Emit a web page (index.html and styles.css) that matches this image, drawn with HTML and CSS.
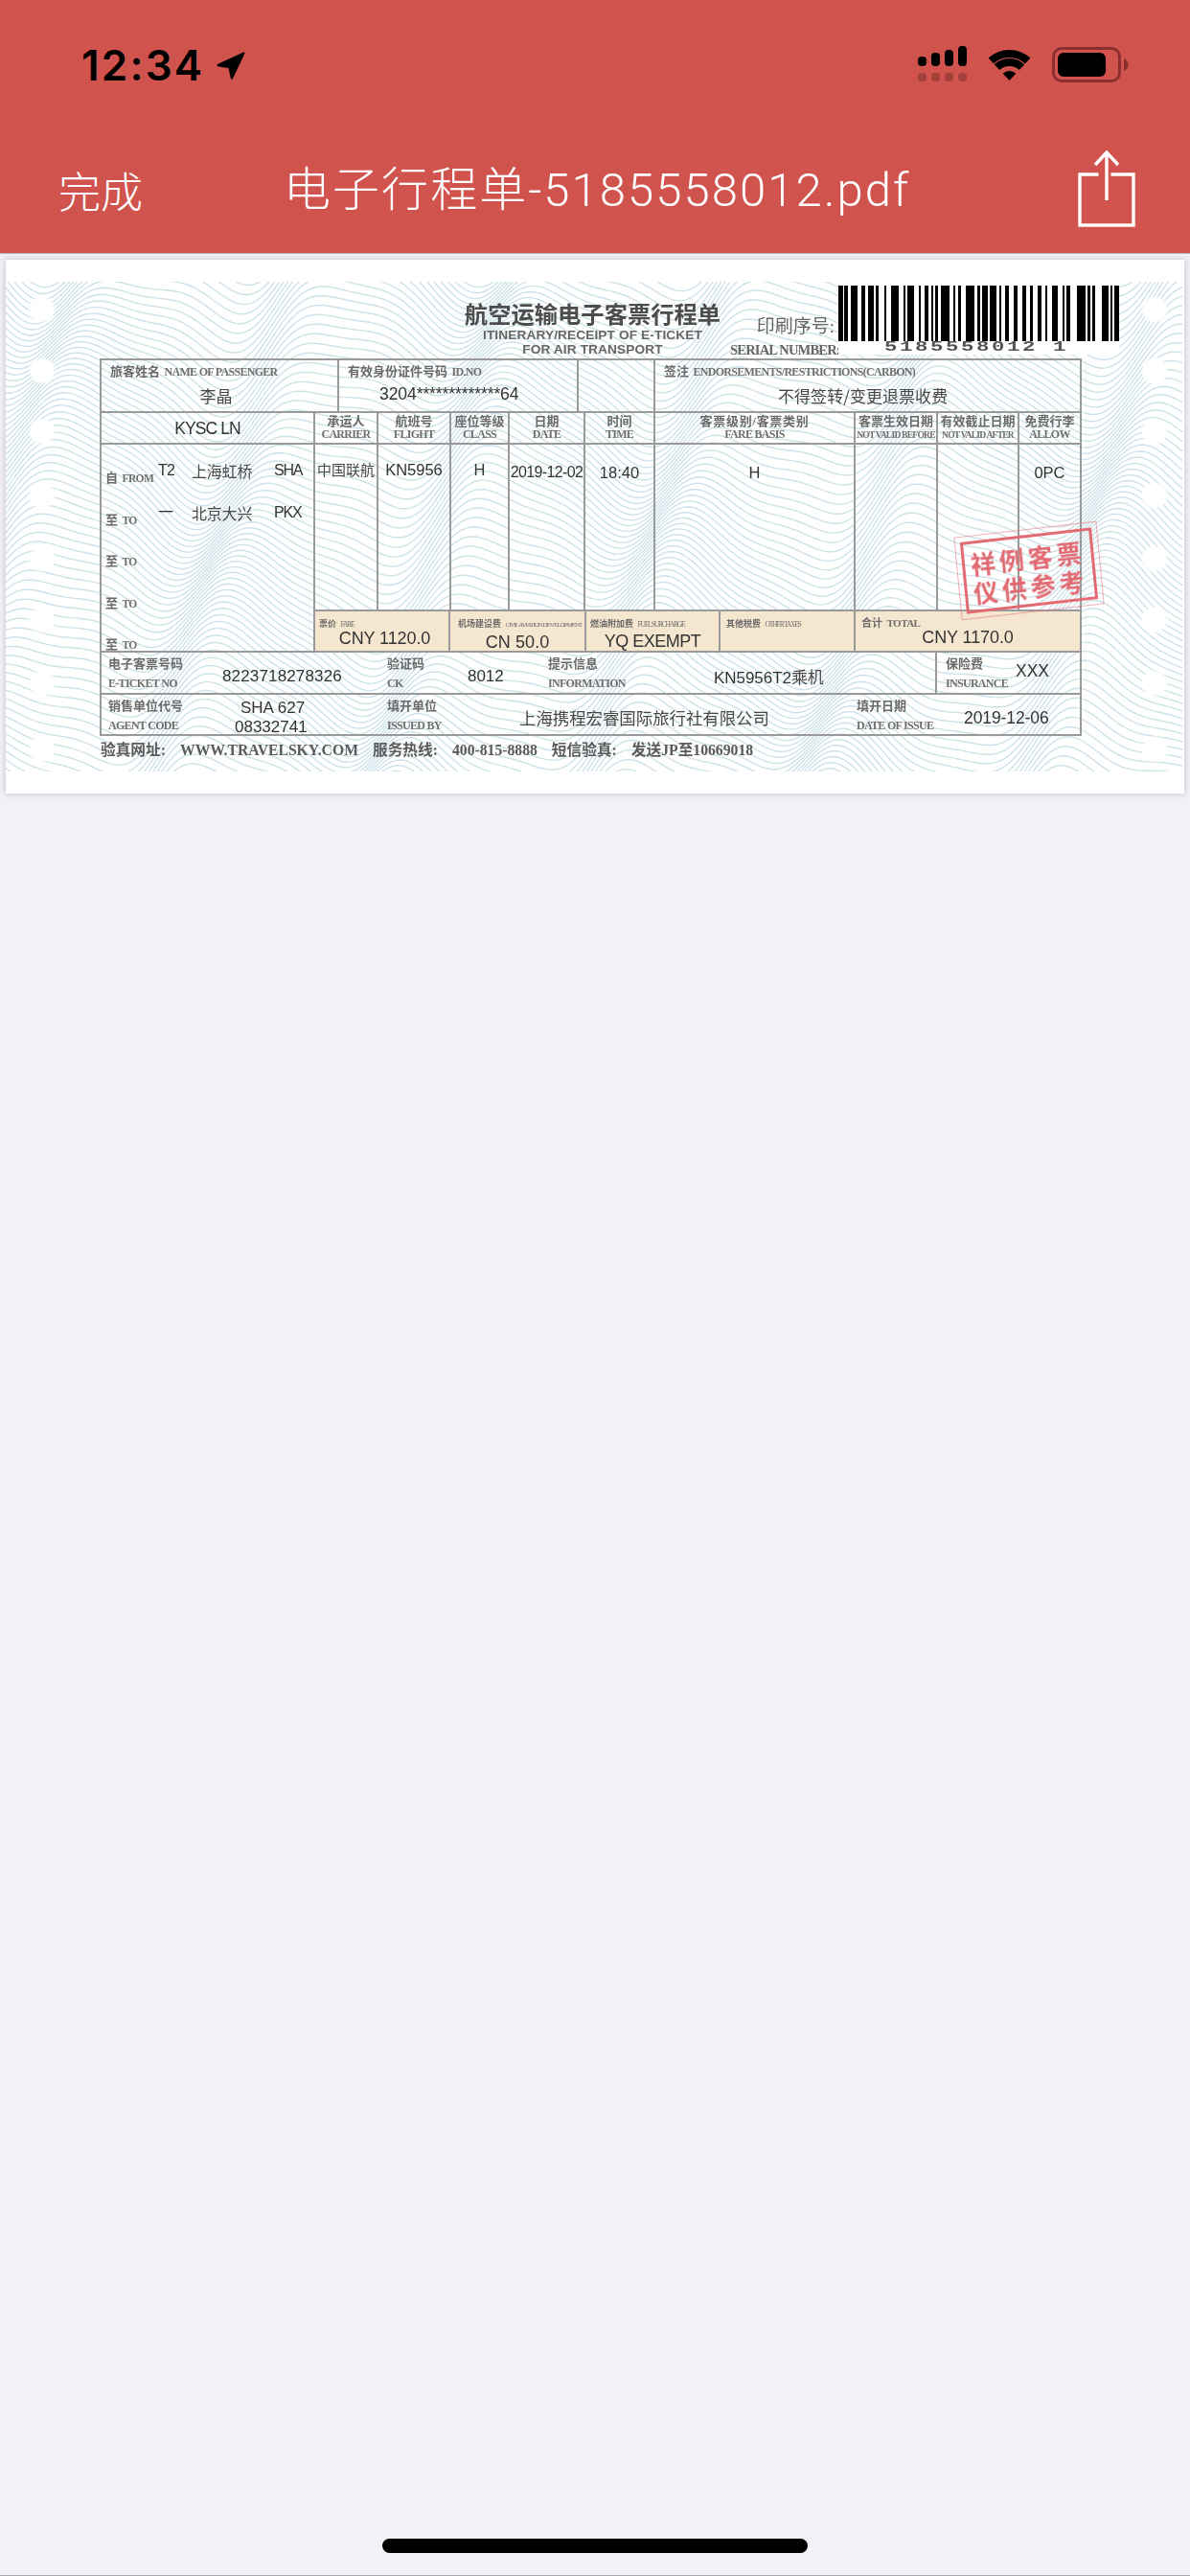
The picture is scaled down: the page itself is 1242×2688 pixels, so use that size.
FILE: index.html
```html
<!DOCTYPE html>
<html lang="zh">
<head>
<meta charset="utf-8">
<title>电子行程单-5185558012.pdf</title>
<link rel="stylesheet" href="styles.css">
<script src="guilloche.js" defer></script>
</head>
<body>
<header class="top">
  <div class="status">
    <span class="time">12:34</span>
    <svg class="loc" viewBox="0 0 32 32" width="32" height="32"><path d="M2 15 L29 2.5 Q31 2 30.3 4 L18 30 Q16.5 32 15.8 29.5 L13.5 19 L3 17.6 Q0.5 16.5 2 15Z"/></svg>
    <div class="signal">
      <div class="sig-col"><i class="bar b1"></i><i class="dim"></i></div>
      <div class="sig-col"><i class="bar b2"></i><i class="dim"></i></div>
      <div class="sig-col"><i class="bar b3"></i><i class="dim"></i></div>
      <div class="sig-col"><i class="bar b4"></i><i class="dim"></i></div>
    </div>
    <svg class="wifi" viewBox="0 0 47 37" width="47" height="37"><path class="arc" d="M4.4 12.5 A28 28 0 0 1 42.6 12.5"/><path class="arc" d="M10.5 19.1 A19 19 0 0 1 36.5 19.1"/><path d="M23.5 33 L16.7 25.7 A10 10 0 0 1 30.3 25.7Z"/></svg>
    <div class="battery"><div class="battery-fill"></div></div>
    <svg class="nub" viewBox="0 0 5 13" width="5" height="13"><path d="M0 0 A7 7 0 0 1 0 13Z"/></svg>
  </div>
  <nav class="nav">
    <span class="done">完成</span>
    <span class="file">电子行程单-5185558012.pdf</span>
    <svg class="share" viewBox="0 0 64 84" width="64" height="84"><path d="M24.5 28 H5 V81 H61 V28 H37.5 M33 55 V5 M21 18 L33 5 L45 18"/></svg>
  </nav>
</header>

<main class="viewer">
  <article class="doc">
    <div class="ticket">
      <svg class="guilloche" id="guilloche" width="1230" height="511"><path id="guilloche-lines" class="guilloche-lines"/></svg>
      <i class="hole l h1"></i><i class="hole l h2"></i><i class="hole l h3"></i><i class="hole l h4"></i><i class="hole l h5"></i><i class="hole l h6"></i><i class="hole l h7"></i><i class="hole l h8"></i>
      <i class="hole r h1"></i><i class="hole r h2"></i><i class="hole r h3"></i><i class="hole r h4"></i><i class="hole r h5"></i><i class="hole r h6"></i><i class="hole r h7"></i><i class="hole r h8"></i>

      <div class="ticket-body">
        <div class="head">
          <div class="title-block">
            <div class="title">航空运输电子客票行程单</div>
            <div class="subtitle">ITINERARY/RECEIPT OF E-TICKET</div>
            <div class="subtitle">FOR AIR TRANSPORT</div>
          </div>
          <div class="serial">
            <div class="serial-cn">印刷序号:</div>
            <div class="serial-en">SERIAL NUMBER:</div>
          </div>
          <div class="barcode">
            <svg viewBox="0 0 293 58" width="293" height="58" preserveAspectRatio="none"><path d="M0 0h5v58H0zM6 0h4v58H6zM13 0h7v58h-7zM24 0h4v58h-4zM31 0h6v58h-6zM39 0h3v58h-3zM48 0h2v58h-2zM55 0h8v58h-8zM68 0h2v58h-2zM72 0h7v58h-7zM84 0h2v58h-2zM90 0h4v58h-4zM97 0h2v58h-2zM101 0h3v58h-3zM107 0h9v58h-9zM120 0h2v58h-2zM125 0h3v58h-3zM133 0h9v58h-9zM145 0h3v58h-3zM150 0h6v58h-6zM158 0h7v58h-7zM168 0h2v58h-2zM174 0h4v58h-4zM183 0h4v58h-4zM192 0h4v58h-4zM200 0h3v58h-3zM208 0h4v58h-4zM216 0h2v58h-2zM223 0h6v58h-6zM234 0h2v58h-2zM238 0h4v58h-4zM249 0h9v58h-9zM260 0h3v58h-3zM265 0h3v58h-3zM275 0h7v58h-7zM284 0h2v58h-2zM288 0h5v58h-5z"/></svg>
            <div class="barcode-num">5185558012&nbsp;1</div>
          </div>
        </div>

        <div class="sheet">
          <div class="row r-pax">
            <div class="cell line pad-pax">
              <div class="label"><span class="cn">旅客姓名</span> <span class="en">NAME OF PASSENGER</span></div>
              <div class="val cjk center">李晶</div>
            </div>
            <div class="cell line pad-pax">
              <div class="label lab-id"><span class="cn">有效身份证件号码</span> <span class="en">ID.NO</span></div>
              <div class="val id">3204*************64</div>
            </div>
            <div class="cell line"></div>
            <div class="cell pad-pax">
              <div class="label lab-end"><span class="cn">签注</span> <span class="en">ENDORSEMENTS/RESTRICTIONS(CARBON)</span></div>
              <div class="val cjk endorse">不得签转/变更退票收费</div>
            </div>
          </div>

          <div class="row r-hdr">
            <div class="cell line mid"><div class="val name">KYSC LN</div></div>
            <div class="cell line th"><div class="cn">承运人</div><div class="en">CARRIER</div></div>
            <div class="cell line th"><div class="cn">航班号</div><div class="en">FLIGHT</div></div>
            <div class="cell line th"><div class="cn">座位等级</div><div class="en">CLASS</div></div>
            <div class="cell line th"><div class="cn">日期</div><div class="en">DATE</div></div>
            <div class="cell line th"><div class="cn">时间</div><div class="en">TIME</div></div>
            <div class="cell line th"><div class="cn wide">客票级别/客票类别</div><div class="en">FARE BASIS</div></div>
            <div class="cell line th"><div class="cn">客票生效日期</div><div class="en tight">NOT VALID BEFORE</div></div>
            <div class="cell line th"><div class="cn">有效截止日期</div><div class="en tight">NOT VALID AFTER</div></div>
            <div class="cell th"><div class="cn">免费行李</div><div class="en">ALLOW</div></div>
          </div>

          <div class="row r-main">
            <div class="route line">
              <div class="leg"><span class="leg-label"><span class="cn">自</span> <span class="en">FROM</span></span><span class="val term">T2</span><span class="val cjk port">上海虹桥</span><span class="val code">SHA</span></div>
              <div class="leg"><span class="leg-label"><span class="cn">至</span> <span class="en">TO</span></span><span class="val term">一</span><span class="val cjk port">北京大兴</span><span class="val code">PKX</span></div>
              <div class="leg"><span class="leg-label"><span class="cn">至</span> <span class="en">TO</span></span></div>
              <div class="leg"><span class="leg-label"><span class="cn">至</span> <span class="en">TO</span></span></div>
              <div class="leg"><span class="leg-label"><span class="cn">至</span> <span class="en">TO</span></span></div>
            </div>
            <div class="main-right">
              <div class="flight">
                <div class="cell line fv"><span class="val cjk">中国联航</span></div>
                <div class="cell line fv"><span class="val">KN5956</span></div>
                <div class="cell line fv"><span class="val">H</span></div>
                <div class="cell line fv low date"><span class="val">2019-12-02</span></div>
                <div class="cell line fv low"><span class="val">18:40</span></div>
                <div class="cell line fv low"><span class="val">H</span></div>
                <div class="cell line"></div>
                <div class="cell line"></div>
                <div class="cell fv low"><span class="val">0PC</span></div>
              </div>
              <div class="fares">
                <div class="fare line"><div class="mini"><span class="cn">票价</span> <span class="en">FARE</span></div><div class="val fare-val f-up">CNY 1120.0</div></div>
                <div class="fare line"><div class="mini"><span class="cn">机场建设费</span> <span class="en civil">CIVIL AVIATION DEVELOPMENT</span></div><div class="val fare-val">CN 50.0</div></div>
                <div class="fare line"><div class="mini"><span class="cn">燃油附加费</span> <span class="en">FUEL SURCHARGE</span></div><div class="val fare-val yq">YQ EXEMPT</div></div>
                <div class="fare line"><div class="mini"><span class="cn">其他税费</span> <span class="en">OTHER TAXES</span></div></div>
                <div class="fare total"><div class="mini total-label"><span class="cn">合计</span> <span class="en">TOTAL</span></div><div class="val fare-val f-up">CNY 1170.0</div></div>
              </div>
            </div>
          </div>

          <div class="row r-ticket">
            <div class="stack first"><div class="cn">电子客票号码</div><div class="en">E-TICKET NO</div></div>
            <div class="val bigv tno">8223718278326</div>
            <div class="stack"><div class="cn">验证码</div><div class="en">CK</div></div>
            <div class="val bigv">8012</div>
            <div class="stack"><div class="cn">提示信息</div><div class="en">INFORMATION</div></div>
            <div class="val bigv line full"><span>KN5956T2<span class="cjk">乘机</span></span></div>
            <div class="stack ins"><div class="cn">保险费</div><div class="en">INSURANCE</div></div>
            <div class="val xxx">XXX</div>
          </div>

          <div class="row r-agent">
            <div class="stack first"><div class="cn">销售单位代号</div><div class="en">AGENT CODE</div></div>
            <div class="agent"><div class="val">SHA 627</div><div class="val agent-no">08332741</div></div>
            <div class="stack"><div class="cn">填开单位</div><div class="en">ISSUED BY</div></div>
            <div class="val cjk issuer">上海携程宏睿国际旅行社有限公司</div>
            <div class="stack"><div class="cn">填开日期</div><div class="en">DATE OF ISSUE</div></div>
            <div class="val issue-date">2019-12-06</div>
          </div>
        </div>

        <div class="foot">
          <span>验真网址:</span><span>WWW.TRAVELSKY.COM</span><span>服务热线:</span><span>400-815-8888</span><span>短信验真:</span><span>发送JP至10669018</span>
        </div>
      </div>

      <div class="stamp">
        <div class="stamp-inner"><div>祥例客票</div><div>仪供参考</div></div>
      </div>
    </div>
  </article>
  <div class="home"></div>
</main>
</body>
</html>
```
FILE: styles.css
```css
* { box-sizing: border-box; }
html, body { margin: 0; padding: 0; }
body {
  width: 1242px; height: 2688px; overflow: hidden;
  background: #f2f1f7;
  display: flex; flex-direction: column;
  font-family: "Liberation Sans", "Noto Sans CJK SC", sans-serif;
  border-bottom: 1px solid #a8a8a8;
}

/* top bar */
.top { height: 265px; background: #d1534e; border-bottom: 1px solid #b9b9bd; flex: none; }
.status { height: 100px; display: flex; align-items: flex-start; padding: 48px 0 0 85px; }
.time { font: 600 44px/40px Inter, sans-serif; color: #000; letter-spacing: 2.2px; width: 135px; }
.loc { margin: 4px 0 0 5px; }
.signal { margin-left: 701px; display: flex; gap: 5px; }
.sig-col { width: 9px; height: 37px; display: flex; flex-direction: column; justify-content: flex-end; gap: 7px; }
.bar { display: block; background: #000; border-radius: 4px; flex: none; }
.b1 { height: 10px; } .b2 { height: 14px; } .b3 { height: 17px; } .b4 { height: 21px; }
.dim { display: block; height: 9px; background: rgba(0,0,0,.22); border-radius: 3.5px; flex: none; }
.wifi { margin: 3px 0 0 21px; }
.wifi path { fill: #000; stroke-linejoin: round; }
.wifi .arc { fill: none; stroke: #000; stroke-width: 8; }
.battery { margin: 1px 0 0 21px; width: 72px; height: 37px; border: 3px solid #8a2f2d; border-radius: 10px; padding: 3px; padding-right: 13px; }
.battery-fill { width: 100%; height: 100%; background: #000; border-radius: 6px; }
.nub { margin: 13px 0 0 3px; fill: #8a2f2d; }

.nav { height: 164px; position: relative; display: flex; color: #fff; }
.done { font: 300 44px/48px "Noto Sans CJK SC", sans-serif; margin: 74px 0 0 61px; width: 235px; }
.file { font: 300 49px/56px Roboto, "Noto Sans CJK SC", sans-serif; margin: 71px 0 0 0; letter-spacing: 2.05px; width: 829px; white-space: nowrap; }
.share { fill: none; stroke: #fff; stroke-width: 3.4; margin: 54px 0 0 -3px; flex: none; }

/* viewer */
.viewer { flex: 1; display: flex; flex-direction: column; }
.doc { margin: 6px 6px 0; height: 557px; background: #fff; padding-top: 23px; box-shadow: 0 0 7px rgba(60,60,80,.28); }
.ticket { height: 511px; position: relative; overflow: hidden; background: #fff; }
.guilloche { position: absolute; left: 0; top: 0; filter: blur(.35px); }
.guilloche-lines { fill: none; stroke: #cee2e9; stroke-width: 1.4; }
.hole { position: absolute; width: 24px; height: 24px; border-radius: 50%; background: #fff; box-shadow: 0 0 3px 1px #fff; }
.hole.l { left: 26px; } .hole.r { left: 1187px; }
.h1 { top: 17px; } .h2 { top: 81px; } .h3 { top: 144px; } .h4 { top: 211px; }
.h5 { top: 277px; } .h6 { top: 341px; } .h7 { top: 407px; } .h8 { top: 476px; }

.ticket-body { position: relative; filter: blur(.45px); color: #333; }

.head { height: 80px; display: flex; padding-left: 476px; }
.title-block { width: 273px; padding-top: 18px; text-align: center; color: #555; }
.title { font: 700 24.3px/30px "Noto Sans CJK SC", sans-serif; white-space: nowrap; color: #4d4d4d; }
.subtitle { font: 700 13.7px/15px "Liberation Sans", sans-serif; color: #666; letter-spacing: .1px; white-space: nowrap; }
.serial { width: 113px; margin-left: 7px; padding-top: 35px; text-align: right; font-family: "Liberation Serif", "Noto Sans CJK SC", serif; color: #666; }
.serial-cn { font-size: 19px; line-height: 24px; padding-right: 4px; white-space: nowrap; }
.serial-en { font-size: 14.5px; line-height: 18px; letter-spacing: -.8px; padding-right: 2px; white-space: nowrap; margin-top: 3px; font-weight: 700; }
.barcode { width: 293px; height: 76px; background: #fff; padding-top: 4px; flex: none; }
.barcode svg { display: block; }
.barcode-num { font: 700 14px/13px "Liberation Mono", monospace; color: #555; letter-spacing: 1.6px; transform: scaleX(1.6); transform-origin: 0 0; padding-left: 30px; white-space: nowrap; }

.sheet { margin-left: 98px; width: 1025px; height: 394px; border: 2px solid #9a9a9a; display: flex; flex-direction: column; }
.row { display: flex; flex: none; }
.row + .row { border-top: 2px solid #9a9a9a; }
.cell { min-width: 0; }
.line { border-right: 2px solid #9a9a9a; }
.cn { font-family: "Liberation Serif", "Noto Sans CJK SC", serif; font-weight: 700; color: #6a6a6a; font-size: 13px; line-height: 14px; }
.en { font-family: "Liberation Serif", serif; font-weight: 700; color: #6f6f6f; font-size: 12px; line-height: 12px; letter-spacing: -.7px; white-space: nowrap; }
.val { font-size: 17.5px; color: #333; white-space: nowrap; line-height: 20px; }
.val.cjk, .val .cjk { font-family: "Noto Sans CJK SC", sans-serif; font-weight: 400; font-size: 17px; color: #484848; }

.r-pax { height: 53px; }
.r-pax .cell:nth-child(1) { width: 248px; }
.r-pax .cell:nth-child(2) { width: 250px; }
.r-pax .cell:nth-child(3) { width: 80px; }
.r-pax .cell:nth-child(4) { flex: 1; }
.pad-pax { padding: 4px 0 0 9px; }
.label { white-space: nowrap; line-height: 14px; }
.center { text-align: center; padding-right: 16px; margin-top: 8px; }
.id { margin: 6px 0 0 33px; font-size: 17.6px; letter-spacing: -.12px; }
.endorse { margin: 8px 0 0 119px; letter-spacing: .05px; }

.r-hdr { height: 33px; display: grid; grid-template-columns: 223px 66px 76px 61px 79px 73px 209px 86px 85px 1fr; }
.mid { display: flex; align-items: center; justify-content: center; }
.name { letter-spacing: -.9px; }
.th { text-align: center; padding-top: 2px; }
.th .cn { display: block; white-space: nowrap; }
.th .en { display: block; line-height: 13px; }
.th .wide { letter-spacing: .7px; }
.th .tight { font-size: 9.6px; letter-spacing: -.8px; }

.r-main { height: 217px; }
.route { width: 223px; flex: none; padding: 17px 0 0 4px; }
.leg { display: grid; grid-template-columns: 55px 35px 86px 1fr; align-items: start; height: 43.5px; }
.leg-label { padding-top: 10px; white-space: nowrap; line-height: 14px; }
.leg-label .en { font-size: 11.5px; letter-spacing: -.6px; }
.term { font-size: 16px; letter-spacing: -.8px; }
.val.port { font-size: 16px; letter-spacing: -.2px; }
.code { font-size: 16px; letter-spacing: -1.2px; }

.main-right { flex: 1; display: flex; flex-direction: column; }
.flight { height: 172px; display: grid; grid-template-columns: 66px 76px 61px 79px 73px 209px 86px 85px 1fr; }
.fv { text-align: center; padding-top: 16px; }
.fv .val { font-size: 16.5px; }
.fv .val.cjk { font-size: 15px; }
.low { padding-top: 19px; }
.fv.date .val { font-size: 16px; letter-spacing: -.65px; }

.fares { height: 43px; border-top: 2px solid #9a9a9a; background: #f5e6cf; display: flex; }
.fare { flex: none; width: 141px; }
.fare:nth-child(2) { width: 142px; }
.fare:nth-child(3) { width: 140px; }
.fare:nth-child(2) .mini { padding-left: 8px; }
.fare:nth-child(4) .mini { padding-left: 6px; }
.total { flex: 1; }
.mini { padding: 5px 0 0 4px; line-height: 11px; white-space: nowrap; }
.mini .cn { font-size: 9px; line-height: 11px; }
.mini .en { font-size: 7.5px; line-height: 11px; letter-spacing: -1.2px; font-weight: 400; }
.mini .civil { font-size: 7px; letter-spacing: -1px; }
.fare-val { text-align: center; line-height: 20px; margin-top: 2px; font-size: 18px; letter-spacing: .1px; }
.yq { letter-spacing: -.5px; }
.f-up { margin-top: -1px; padding-left: 6px; letter-spacing: -.1px; }
.total .f-up { padding-left: 0; }
.total-label { padding-left: 6px; }
.total-label .cn { font-size: 11px; }
.total-label .en { font-size: 11px; font-weight: 700; letter-spacing: -.5px; }

.r-ticket { height: 44px; display: grid; grid-template-columns: 126px 172px 84px 84px 173px 233px 82px 1fr; }
.r-agent { height: 42px; display: grid; grid-template-columns: 139px 159px 138px 352px 112px 1fr; }
.stack { padding-top: 5px; }
.stack.first { padding-left: 7px; }
.stack.ins { padding-left: 9px; }
.stack .cn { display: block; line-height: 14px; white-space: nowrap; }
.stack .en { display: block; line-height: 12px; margin-top: 7px; }
.bigv { padding-top: 15px; font-size: 17px; letter-spacing: -.05px; }
.tno { letter-spacing: .15px; }
.bigv.full { height: 42px; }
.xxx { padding-top: 9px; font-size: 17.5px; }
.agent { padding: 4px 0 0 6px; }
.agent .val { line-height: 20px; font-size: 17px; }
.agent-no { margin: 0 0 0 -6px; }
.val.issuer { padding-top: 14px; font-size: 17.4px; }
.issue-date { padding-top: 14px; font-size: 17.5px; letter-spacing: -.1px; }

.foot { margin: 6px 0 0 99px; display: flex; font: 700 15.7px/18px "Liberation Serif", "Noto Sans CJK SC", serif; color: #5a5a5a; white-space: nowrap; }
.foot span + span { margin-left: 15px; }

.stamp { position: absolute; left: 993px; top: 258px; width: 150px; height: 87px; border: 1px solid rgba(226,110,118,.55); transform: rotate(-6.5deg) skewX(-1deg); padding: 5px; }
.stamp-inner { width: 100%; height: 100%; border: 3px solid #e26a72; color: #e26a72; font: 700 26px/30px "Noto Sans CJK SC", sans-serif; letter-spacing: 4px; text-align: center; padding-top: 6px; white-space: nowrap; filter: blur(.4px); }

.home { width: 444px; height: 15px; border-radius: 8px; background: #000; margin: 1821px auto 0; flex: none; }
```
FILE: guilloche.js
```js
// Draws the wavy security print behind the ticket as stacked, non-crossing lines.
(function () {
  var WIDTH = 1230, HEIGHT = 511, SPACING = 8, STEP = 4, BLEED = 90;
  var d = [];
  for (var y0 = -BLEED; y0 < HEIGHT + BLEED; y0 += SPACING) {
    var pts = [];
    for (var x = 0; x <= WIDTH; x += STEP) {
      var y = y0 +
        30 * Math.sin(x * 0.028 + y0 * 0.008 + 1) +
        20 * Math.sin(x * 0.013 - y0 * 0.010) +
        9 * Math.sin(x * 0.055 + y0 * 0.014);
      pts.push(x + " " + y.toFixed(1));
    }
    d.push("M" + pts.join("L"));
  }
  document.getElementById("guilloche-lines").setAttribute("d", d.join(""));
})();
```
